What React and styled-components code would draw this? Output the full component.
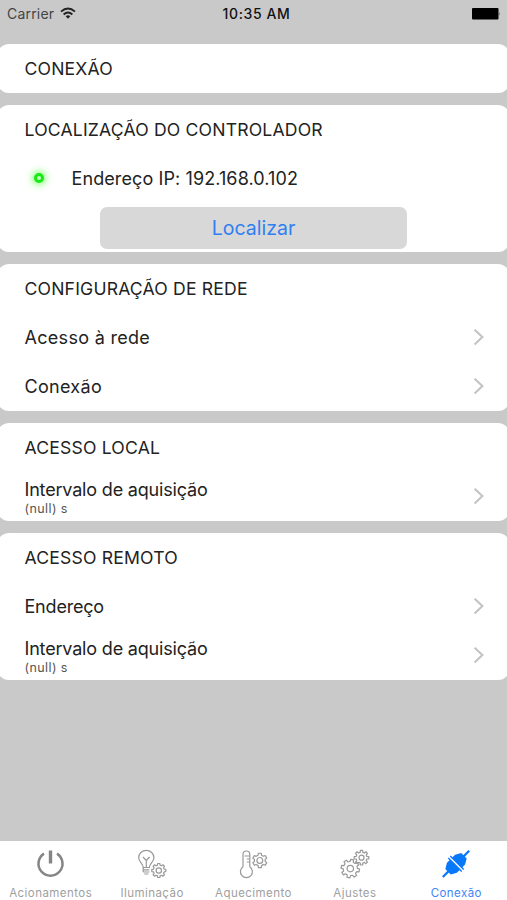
import React from 'react';
import styled, { createGlobalStyle } from 'styled-components';

const GlobalStyle = createGlobalStyle`
    * {
        box-sizing: border-box;
    }
    body {
        margin: 0;
        background: #c9c9c9;
        font-family: Inter, "Liberation Sans", sans-serif;
        color: #222;
    }
`;

const Screen = styled.div`
    display: flex;
    flex-direction: column;
    height: 900px;
    overflow: hidden;
    background: #c9c9c9;
`;

const StatusBar = styled.header`
    display: grid;
    grid-template-columns: 1fr auto 1fr;
    align-items: center;
    height: 27px;
    padding: 0 6px 0 7px;
    font-size: 14px;
`;

const Carrier = styled.div`
    display: flex;
    align-items: center;
    gap: 6px;
    color: #444;
    letter-spacing: 0.2px;

    svg {
        margin-top: -1px;
    }
`;

const Clock = styled.div`
    font-weight: 500;
    color: #111;
    letter-spacing: 0.6px;
    padding-left: 5px;
`;

const Battery = styled.div`
    display: flex;
    justify-content: flex-end;
`;

const Cards = styled.main`
    flex: 1;
    display: flex;
    flex-direction: column;
    gap: 12px;
    margin: 0 -3px;
    padding-top: 17px;
`;

const Card = styled.section`
    background: #fff;
    border-radius: 12px;
`;

const Row = styled.div`
    display: flex;
    align-items: center;
    justify-content: space-between;
    height: 49px;
    padding: 0 25px 0 27.5px;
`;

const Heading = styled.h2`
    margin: 0;
    font-size: 17.6px;
    line-height: 22px;
    font-weight: 400;
    white-space: nowrap;
    letter-spacing: 0.18px;
`;

const Label = styled.div`
    font-size: 18px;
    line-height: 22px;
    white-space: nowrap;
    letter-spacing: ${props => props.$spacing || 0}px;
`;

const Detail = styled.div`
    margin-top: 1px;
    font-size: 12.5px;
    line-height: 14px;
    color: #555;
    letter-spacing: 0.4px;
`;

const Texts = styled.div`
    padding-top: 2px;
`;

const AddressRow = styled.div`
    display: flex;
    align-items: center;
    height: 49px;
    padding-left: 37px;
    gap: 27.5px;
`;

const Led = styled.div`
    width: 10px;
    height: 10px;
    margin-top: -2px;
    border: 3px solid #18ea14;
    border-radius: 50%;
    background: #c8ffc4;
    box-shadow: 0 0 7px 2px rgba(90, 255, 70, 0.7);
`;

const ButtonRow = styled.div`
    display: flex;
    align-items: center;
    justify-content: center;
    height: 49px;
`;

const LocateButton = styled.button`
    width: 307px;
    height: 42px;
    margin-top: 1px;
    padding: 0;
    border: 0;
    border-radius: 7px;
    background: #d8d8d8;
    color: #2f7ff3;
    font-family: inherit;
    font-size: 19.5px;
`;

const TabBar = styled.nav`
    display: grid;
    grid-template-columns: repeat(5, 1fr);
    height: 59px;
    background: #fff;
`;

const Tab = styled.div`
    display: flex;
    flex-direction: column;
    align-items: center;
    padding-top: 8px;
    font-size: 11.5px;
    line-height: 14px;
    white-space: nowrap;
    letter-spacing: 0.45px;
    color: ${props => props.$active ? '#3f86f5' : '#a0a0a0'};

    svg {
        margin-bottom: 6px;
    }
`;

const gearPath = (cx, cy, r, depth, teeth, turn = 0) => {
    const step = (Math.PI * 2) / teeth;
    const points = [];
    for (let i = 0; i < teeth; i++) {
        const a = turn + i * step;
        [[-0.2, r], [0.2, r], [0.3, r - depth], [0.7, r - depth]].forEach(([t, rad]) => {
            const x = cx + Math.cos(a + t * step) * rad;
            const y = cy + Math.sin(a + t * step) * rad;
            points.push(`${x.toFixed(2)} ${y.toFixed(2)}`);
        });
    }
    return `M${points.join('L')}Z`;
};

const TabIcon = ({ children, color = '#999', width = 1.2 }) => (
    <svg width="32" height="31" viewBox="0 0 32 31" fill="none" stroke={color} strokeWidth={width} strokeLinejoin="round">
        {children}
    </svg>
);

const PowerIcon = () => (
    <TabIcon color="#858585" width={2.5}>
        <path d="M9 4.6A12 12 0 1 0 22 4.6" />
        <path d="M15.5 1.5V14.5" strokeWidth="3.4" />
    </TabIcon>
);

const BulbIcon = () => (
    <TabIcon>
        <path d="M7.2 18.5C7.2 14.5 2.7 13.2 2.7 8.7A7.6 7.4 0 0 1 17.9 8.7C17.9 13.2 13.4 14.5 13.4 18.5Z" />
        <path d="M7 8L10.3 11.5L13.6 8M10.3 11.5V18M7.2 20.8H13.4M7.2 23H13.4M8.3 25H12.3M7.2 18.5V23" />
        <path d={gearPath(22.8, 21.5, 7.1, 1.6, 8)} />
        <circle cx="22.8" cy="21.5" r="2.7" />
    </TabIcon>
);

const ThermometerIcon = () => (
    <TabIcon>
        <path d="M6 17.7V5.4a3.4 3.4 0 0 1 6.8 0V17.7a6 6 0 1 1-6.8 0Z" />
        <path d="M7.5 7h5M9.8 10h3M9.8 13h3" />
        <path d={gearPath(22.8, 11.4, 7.3, 1.8, 6, 0.52)} />
        <circle cx="22.8" cy="11.4" r="2.9" />
    </TabIcon>
);

const GearsIcon = () => (
    <TabIcon>
        <path d={gearPath(11.3, 19.6, 9.3, 2.2, 8, 0.2)} />
        <circle cx="11.3" cy="19.6" r="3.2" />
        <path d={gearPath(22.5, 8.7, 7.4, 1.9, 8)} />
        <circle cx="22.5" cy="8.7" r="2.5" />
    </TabIcon>
);

const PlugIcon = () => (
    <TabIcon color="#0878fb" width={2.3}>
        <path d="M2.8 28L11 19.8M21 10L29.2 1.8" />
        <g transform="rotate(45 16 14.7)" fill="#0878fb" stroke="none">
            <path d="M6.5 15.4H25.5V16.8H23V20.5L19.8 26H12.2L9 20.5V16.8H6.5Z" />
            <path d="M6.5 14V12.6H9V8.9L12.2 3.4H19.8L23 8.9V12.6H25.5V14Z" />
        </g>
    </TabIcon>
);

const WifiIcon = () => (
    <svg width="16" height="13" viewBox="0 0 16 13" fill="none" stroke="#222" strokeWidth="1.9">
        <path d="M1 4.6Q8-1.5 15 4.6M3.6 7.4Q8 3.7 12.4 7.4" />
        <path d="M5.7 9.2Q8 7.3 10.3 9.2L8 11.8Z" fill="#222" stroke="none" />
    </svg>
);

const BatteryIcon = () => (
    <svg width="30" height="12" viewBox="0 0 30 12">
        <rect x="1" y="0" width="26.5" height="11.5" rx="1" fill="#000" />
        <path d="M28.3 4.2Q30 5.8 28.3 7.4Z" fill="#555" />
    </svg>
);

const Chevron = () => (
    <svg width="12" height="18" viewBox="0 0 12 18" fill="none" stroke="#c3c3c3" strokeWidth="2.1">
        <path d="M1.6 0.8L9.4 8.1L1.6 15.4" />
    </svg>
);

const LinkRow = ({ label, detail, spacing }) => (
    <Row>
        {detail ? (
            <Texts>
                <Label $spacing={spacing}>{label}</Label>
                <Detail>{detail}</Detail>
            </Texts>
        ) : (
            <Label $spacing={spacing}>{label}</Label>
        )}
        <Chevron />
    </Row>
);

const tabs = [
    { name: 'Acionamentos', icon: PowerIcon },
    { name: 'Iluminação', icon: BulbIcon },
    { name: 'Aquecimento', icon: ThermometerIcon },
    { name: 'Ajustes', icon: GearsIcon },
    { name: 'Conexão', icon: PlugIcon, active: true }
];

const App = () => (
    <Screen>
        <GlobalStyle />
        <StatusBar>
            <Carrier>
                Carrier
                <WifiIcon />
            </Carrier>
            <Clock>10:35 AM</Clock>
            <Battery><BatteryIcon /></Battery>
        </StatusBar>
        <Cards>
            <Card>
                <Row><Heading>CONEXÃO</Heading></Row>
            </Card>
            <Card>
                <Row><Heading>LOCALIZAÇÃO DO CONTROLADOR</Heading></Row>
                <AddressRow>
                    <Led />
                    <Label $spacing={0.1}>Endereço IP: 192.168.0.102</Label>
                </AddressRow>
                <ButtonRow>
                    <LocateButton>Localizar</LocateButton>
                </ButtonRow>
            </Card>
            <Card>
                <Row><Heading>CONFIGURAÇÃO DE REDE</Heading></Row>
                <LinkRow label="Acesso à rede" spacing={0.3} />
                <LinkRow label="Conexão" spacing={0.3} />
            </Card>
            <Card>
                <Row><Heading>ACESSO LOCAL</Heading></Row>
                <LinkRow label="Intervalo de aquisição" detail="(null) s" spacing={-0.18} />
            </Card>
            <Card>
                <Row><Heading>ACESSO REMOTO</Heading></Row>
                <LinkRow label="Endereço" spacing={-0.2} />
                <LinkRow label="Intervalo de aquisição" detail="(null) s" spacing={-0.18} />
            </Card>
        </Cards>
        <TabBar>
            {tabs.map(({ name, icon: Icon, active }) => (
                <Tab key={name} $active={active}>
                    <Icon />
                    {name}
                </Tab>
            ))}
        </TabBar>
    </Screen>
);

export default App;
